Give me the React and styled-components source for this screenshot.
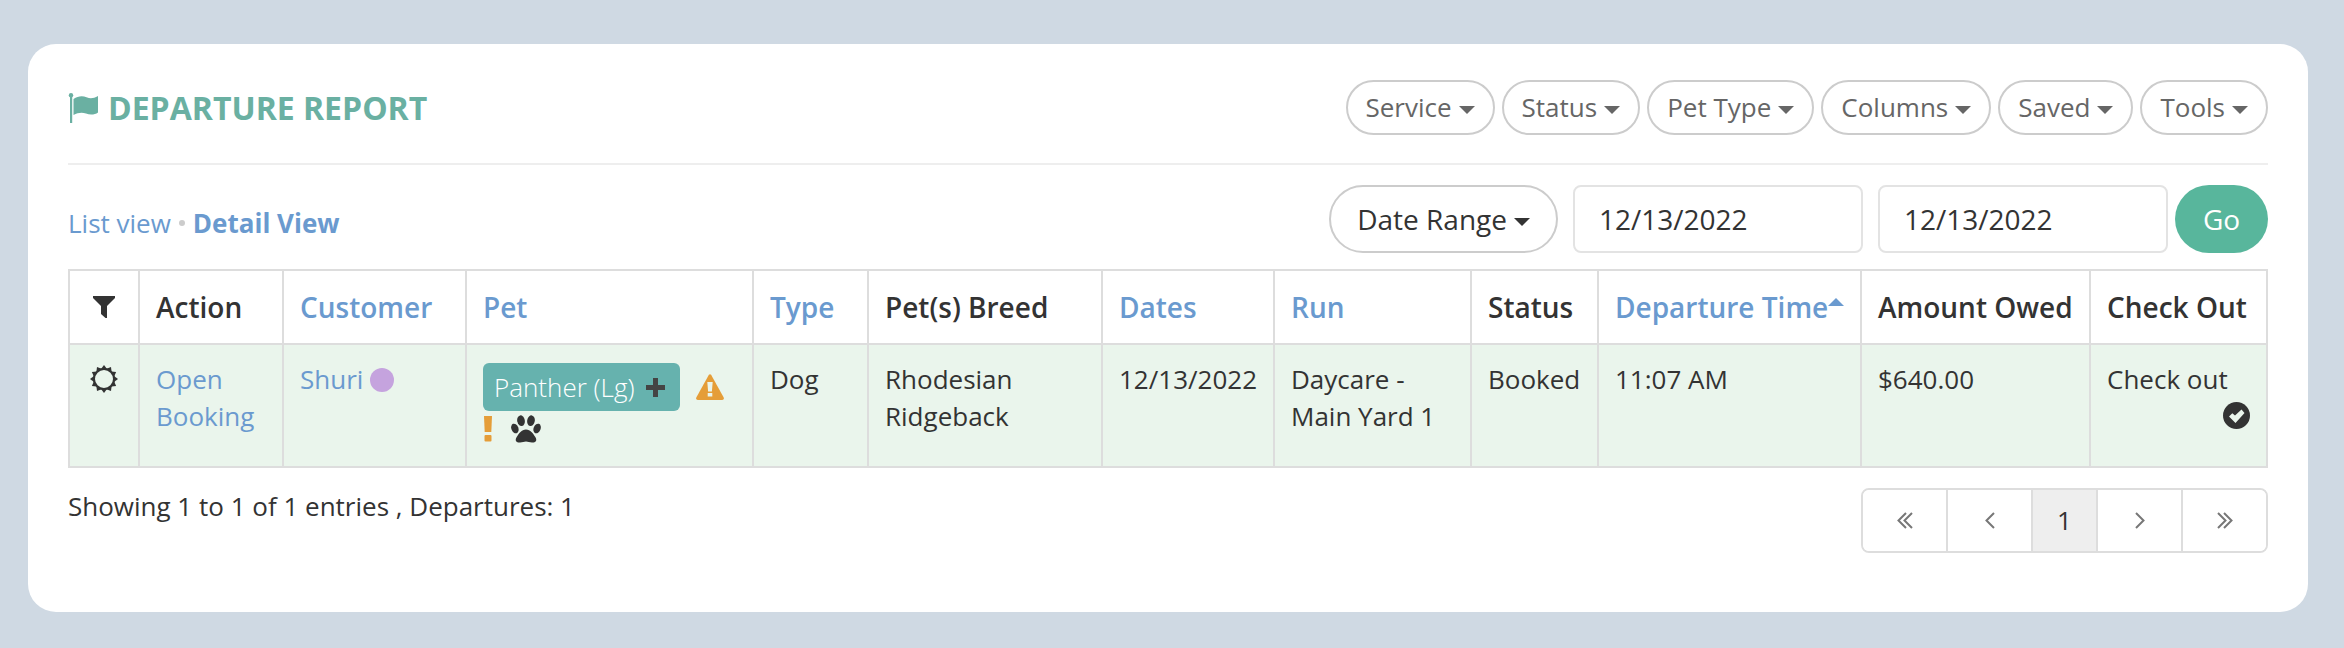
import React from "react";
import styled, { createGlobalStyle } from "styled-components";

const Global = createGlobalStyle`
  *, *::before, *::after { box-sizing: border-box; }
  body {
    margin: 0;
    background: #cfd9e3;
    color: #333;
    font: 400 26px/37px "Open Sans", "Noto Sans", sans-serif;
  }
  button, input { font: inherit; color: inherit; margin: 0; }
  button { cursor: pointer; }
  svg { display: block; }
`;

const Card = styled.main`
  margin: 44px 36px 36px 28px;
  padding: 36px 40px 59px;
  background: #fff;
  border-radius: 28px;
`;

const Header = styled.header`
  display: flex;
  align-items: center;
  justify-content: space-between;
  padding-bottom: 28px;
  border-bottom: 2px solid #eee;
`;

const Title = styled.h1`
  display: flex;
  align-items: center;
  gap: 10px;
  margin: 0;
  font-size: 32px;
  line-height: 44px;
  font-weight: 700;
  color: #6ab0a2;
`;

const FilterBar = styled.nav`
  display: flex;
  gap: 7px;
`;

const PillButton = styled.button`
  display: flex;
  align-items: center;
  gap: 7px;
  height: ${(p) => (p.$large ? 68 : 55)}px;
  padding: 0 ${(p) => (p.$large ? 26 : 18)}px;
  border: 2px solid #ccc;
  border-radius: 34px;
  background: #fff;
  color: ${(p) => (p.$large ? "#333" : "#666")};
  font-size: ${(p) => (p.$large ? 28 : 26)}px;
  white-space: nowrap;
`;

const Caret = styled.span`
  border: 8px solid transparent;
  border-bottom-width: 0;
  border-top-color: currentColor;
  margin-top: 5px;
`;

const SubBar = styled.div`
  display: flex;
  justify-content: space-between;
  padding: 20px 0 16px;
`;

const ViewLinks = styled.div`
  display: flex;
  align-items: center;
  gap: 8px;
  padding-top: 8px;
`;

const Link = styled.a`
  color: #6a9acf;
  font-weight: ${(p) => (p.$current ? 700 : "inherit")};
  text-decoration: none;
`;

const Dot = styled.span`
  width: 6px;
  height: 6px;
  border-radius: 50%;
  background: #ccc;
`;

const DateForm = styled.form`
  display: flex;
  gap: 7px;
`;

const DateFields = styled.div`
  display: flex;
  gap: 15px;
`;

const DateInput = styled.input`
  width: 290px;
  height: 68px;
  padding: 0 24px;
  border: 2px solid #e3e3e3;
  border-radius: 8px;
  background: #fff;
  font-size: 28px;
`;

const GoButton = styled.button`
  width: 93px;
  height: 68px;
  padding: 0;
  border: 0;
  border-radius: 34px;
  background: #58b69c;
  color: #fff;
  font-size: 28px;
`;

const Table = styled.table`
  width: 100%;
  table-layout: fixed;
  border-collapse: collapse;
`;

const Th = styled.th`
  padding: 16px;
  border: 2px solid #ddd;
  font-size: 28px;
  line-height: 40px;
  font-weight: 600;
  text-align: left;
  white-space: nowrap;
`;

const Td = styled.td`
  height: 123px;
  padding: 16px;
  border: 2px solid #ddd;
  background: #eaf5ec;
  vertical-align: top;
`;

const CellIcon = styled.div`
  display: flex;
  align-items: center;
  justify-content: ${(p) => (p.$end ? "flex-end" : "center")};
  height: 35px;
`;

const SortUp = styled.span`
  display: inline-block;
  border: 8px solid transparent;
  border-top-width: 0;
  border-bottom-color: currentColor;
  vertical-align: 12px;
`;

const Customer = styled.div`
  display: flex;
  align-items: center;
  gap: 7px;
`;

const Tag = styled.span`
  width: 24px;
  height: 24px;
  border-radius: 50%;
  background: #c5a3de;
`;

const PetLine = styled.div`
  display: flex;
  align-items: center;
  gap: ${(p) => p.$gap}px;
  padding-top: ${(p) => p.$top}px;
`;

const PetBadge = styled.button`
  display: flex;
  align-items: center;
  gap: 11px;
  height: 48px;
  padding: 0 15px 0 11px;
  border: 0;
  border-radius: 6px;
  background: #66b2ae;
  color: #fff;
  font-weight: 300;
  white-space: nowrap;
`;

const Footer = styled.footer`
  display: flex;
  align-items: flex-start;
  justify-content: space-between;
  padding-top: 20px;
`;

const Pager = styled.nav`
  display: flex;
  border: 2px solid #ddd;
  border-radius: 8px;
  overflow: hidden;
`;

const PageButton = styled.button`
  display: flex;
  align-items: center;
  justify-content: center;
  width: ${(p) => (p.$current ? 65 : 85)}px;
  height: 61px;
  padding: 0;
  border: 0;
  border-right: 2px solid #ddd;
  background: ${(p) => (p.$current ? "#eee" : "#fff")};
  color: ${(p) => (p.$current ? "#333" : "#777")};
  &:last-child { width: 83px; border-right: 0; }
`;

const FlagIcon = () => (
  <svg width="30" height="30" viewBox="-1 1 30 30" fill="currentColor" aria-hidden="true">
    <circle cx="2" cy="3.200" r="2.200" />
    <rect x="1" y="3" width="2.200" height="28" />
    <path d="M4.500 7C9 3.800 13.500 3.500 17.500 5.200c4 1.800 7 1.200 11.500-1.200v16.500c-3 2.300-8 2.800-12 1-4-1.500-8-1-12.500 1.500z" />
  </svg>
);

const FunnelIcon = () => (
  <svg width="22" height="22" viewBox="0 0 22 22" fill="currentColor" aria-hidden="true">
    <path d="M0 0h22v2l-8 8v12h-1.500L8 18v-8L0 2z" />
  </svg>
);

const sunRays = Array.from({ length: 12 }, (_, i) => i * 30);

const SunIcon = () => (
  <svg width="28" height="28" viewBox="-14 -14 28 28" fill="currentColor" aria-hidden="true">
    <circle r="10" fill="none" stroke="currentColor" strokeWidth="2" />
    {sunRays.map((a) => (
      <path key={a} d="M-3-10L0-14 3-10z" transform={`rotate(${a})`} />
    ))}
  </svg>
);

const PlusIcon = () => (
  <svg width="19" height="19" viewBox="0 0 19 19" fill="#444" aria-hidden="true">
    <path d="M7 0h5v7h7v5h-7v7H7v-7H0V7h7z" />
  </svg>
);

const WarningIcon = () => (
  <svg width="28" height="26" viewBox="0 0 28 26" aria-hidden="true">
    <path fill="#e59d38" d="M12.900.8q1.100-1.300 2.200 0L27.700 23.500q.7 2.500-1.500 2.500H1.800Q-.4 26 .3 23.500z" />
    <path fill="#eaf5ec" d="M11.300 8h5.400l-.8 9.500h-3.800zM11.700 19h4.600v3.500h-4.600z" />
  </svg>
);

const BangIcon = () => (
  <svg width="10" height="26" viewBox="0 0 10 26" fill="#e59d38" aria-hidden="true">
    <path d="M1 0h8l-.7 16H1.700z" />
    <rect x="1.500" y="19" width="7" height="6.500" rx="1" />
  </svg>
);

const PawIcon = () => (
  <svg width="30" height="28" viewBox="0 0 30 28" fill="currentColor" aria-hidden="true">
    <ellipse cx="10" cy="5.700" rx="3.800" ry="5.400" transform="rotate(-10 10 5.700)" />
    <ellipse cx="20" cy="5.700" rx="3.800" ry="5.400" transform="rotate(10 20 5.700)" />
    <ellipse cx="3.900" cy="13.500" rx="3.500" ry="5" transform="rotate(-22 3.900 13.500)" />
    <ellipse cx="26.100" cy="13.500" rx="3.500" ry="5" transform="rotate(22 26.100 13.500)" />
    <path d="M15 14.500c4.500 0 7 4 9.300 7.500 2.500 4-.3 5.800-3.300 5.500-2.500-.2-4-1-6-1s-3.500.8-6 1c-3 .3-5.800-1.500-3.300-5.500C8 18.500 10.500 14.500 15 14.500z" />
  </svg>
);

const CheckIcon = () => (
  <svg width="27" height="27" viewBox="0 0 27 27" aria-hidden="true">
    <circle cx="13.500" cy="13.500" r="13.500" fill="#333" />
    <path fill="#eaf5ec" d="M6 14.500L9.300 11.300 12 13.500 18.500 7.500 21.500 11 12.500 21z" />
  </svg>
);

const Chevron = ({ double, flip }) => (
  <svg
    width={double ? 16 : 10}
    height="17"
    viewBox={double ? "0 0 16 17" : "0 0 10 17"}
    fill="none"
    stroke="currentColor"
    strokeWidth="2"
    transform={flip ? "scale(-1 1)" : undefined}
    aria-hidden="true"
  >
    <path d={double ? "M9 1L1.500 8.500 9 16M15 1L7.500 8.500 15 16" : "M9 1L1.500 8.500 9 16"} />
  </svg>
);

const filters = ["Service", "Status", "Pet Type", "Columns", "Saved", "Tools"];
const columnWidths = [70, 144, 183, 287, 115, 234, 172, 197, 127, 263, 229, 177];

export default function App() {
  return (
    <>
      <Global />
      <Card>
        <Header>
          <Title>
            <FlagIcon />
            DEPARTURE REPORT
          </Title>
          <FilterBar aria-label="Report filters">
            {filters.map((f) => (
              <PillButton key={f} type="button">
                {f}
                <Caret />
              </PillButton>
            ))}
          </FilterBar>
        </Header>

        <SubBar>
          <ViewLinks>
            <Link href="#list">List view</Link>
            <Dot />
            <Link href="#detail" $current>Detail View</Link>
          </ViewLinks>
          <DateForm onSubmit={(e) => e.preventDefault()}>
            <DateFields>
              <PillButton type="button" $large>
                Date Range
                <Caret />
              </PillButton>
              <DateInput aria-label="Start date" defaultValue="12/13/2022" />
              <DateInput aria-label="End date" defaultValue="12/13/2022" />
            </DateFields>
            <GoButton type="submit">Go</GoButton>
          </DateForm>
        </SubBar>

        <Table>
          <colgroup>
            {columnWidths.map((w, i) => (
              <col key={i} width={w} />
            ))}
          </colgroup>
          <thead>
            <tr>
              <Th aria-label="Filter"><CellIcon><FunnelIcon /></CellIcon></Th>
              <Th>Action</Th>
              <Th><Link href="#customer">Customer</Link></Th>
              <Th><Link href="#pet">Pet</Link></Th>
              <Th><Link href="#type">Type</Link></Th>
              <Th>Pet(s) Breed</Th>
              <Th><Link href="#dates">Dates</Link></Th>
              <Th><Link href="#run">Run</Link></Th>
              <Th>Status</Th>
              <Th><Link href="#departure">Departure Time<SortUp /></Link></Th>
              <Th>Amount Owed</Th>
              <Th>Check Out</Th>
            </tr>
          </thead>
          <tbody>
            <tr>
              <Td><CellIcon><SunIcon /></CellIcon></Td>
              <Td><Link href="#booking">Open Booking</Link></Td>
              <Td>
                <Customer>
                  <Link href="#shuri">Shuri</Link>
                  <Tag />
                </Customer>
              </Td>
              <Td>
                <PetLine $gap={16} $top={2}>
                  <PetBadge type="button">
                    Panther (Lg)
                    <PlusIcon />
                  </PetBadge>
                  <WarningIcon />
                </PetLine>
                <PetLine $gap={18} $top={4}>
                  <BangIcon />
                  <PawIcon />
                </PetLine>
              </Td>
              <Td>Dog</Td>
              <Td>Rhodesian Ridgeback</Td>
              <Td>12/13/2022</Td>
              <Td>Daycare - Main Yard 1</Td>
              <Td>Booked</Td>
              <Td>11:07 AM</Td>
              <Td>$640.00</Td>
              <Td>
                Check out
                <CellIcon $end><CheckIcon /></CellIcon>
              </Td>
            </tr>
          </tbody>
        </Table>

        <Footer>
          <span>Showing 1 to 1 of 1 entries , Departures: 1</span>
          <Pager aria-label="Pages">
            <PageButton aria-label="First"><Chevron double /></PageButton>
            <PageButton aria-label="Previous"><Chevron /></PageButton>
            <PageButton $current>1</PageButton>
            <PageButton aria-label="Next"><Chevron flip /></PageButton>
            <PageButton aria-label="Last"><Chevron double flip /></PageButton>
          </Pager>
        </Footer>
      </Card>
    </>
  );
}
